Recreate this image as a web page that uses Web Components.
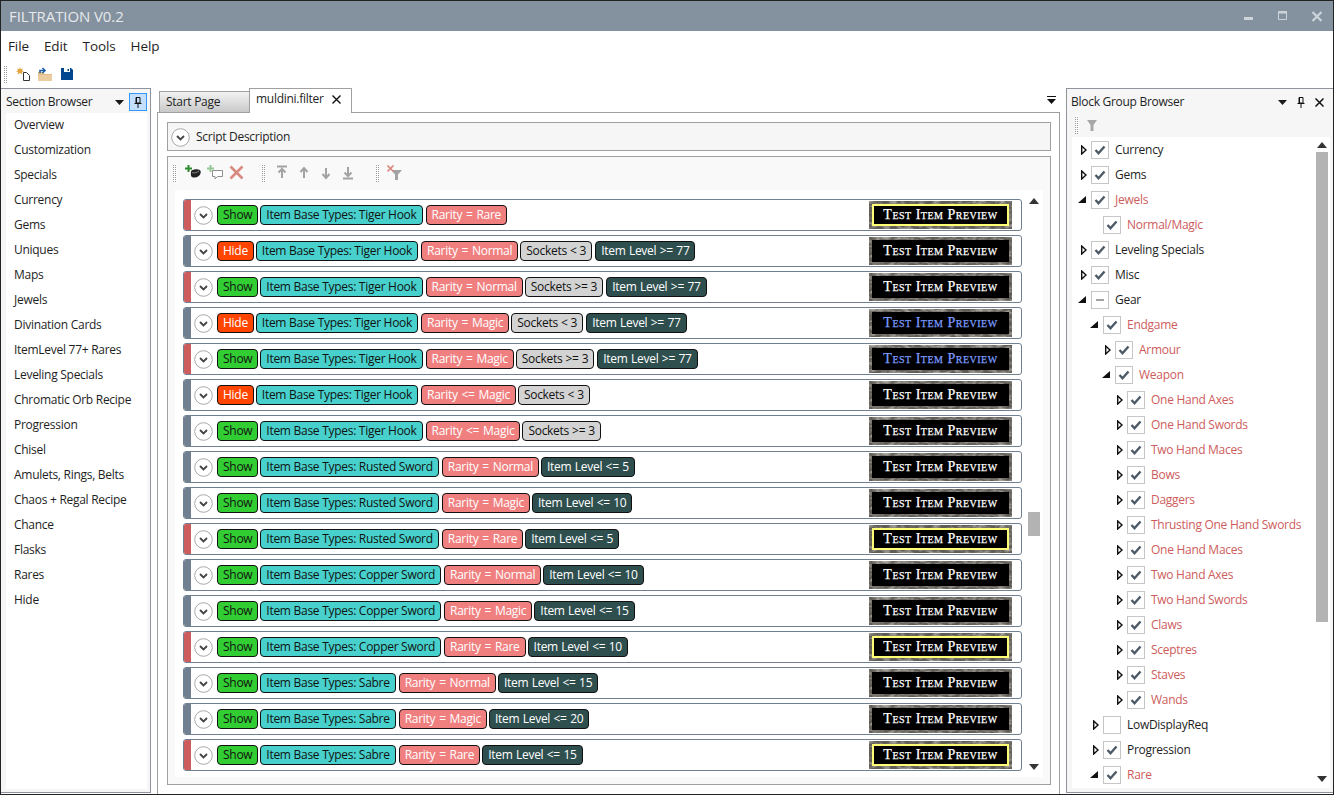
<!DOCTYPE html>
<html>
<head>
<meta charset="utf-8">
<title>Filtration</title>
<style>
    html, body { margin: 0; height: 100%; background: #fff; overflow: hidden; }
    body { font: 12px/16px "Open Sans", "Noto Sans", sans-serif; color: #1e1e1e; letter-spacing: -0.28px; }
</style>
</head>
<body>
<app-window>
    <title-bar slot="title">FILTRATION V0.2</title-bar>
    <menu-bar slot="menu"></menu-bar>
    <main-toolbar slot="tools"></main-toolbar>

    <section-browser slot="left"></section-browser>

    <document-pane slot="center">
        <block-row stripe="red" preview="rare"><filter-tag kind="show">Show</filter-tag><filter-tag kind="base">Item Base Types: Tiger Hook</filter-tag><filter-tag kind="rarity">Rarity = Rare</filter-tag></block-row>
        <block-row preview="normal"><filter-tag kind="hide">Hide</filter-tag><filter-tag kind="base">Item Base Types: Tiger Hook</filter-tag><filter-tag kind="rarity">Rarity = Normal</filter-tag><filter-tag kind="sockets">Sockets &lt; 3</filter-tag><filter-tag kind="level">Item Level &gt;= 77</filter-tag></block-row>
        <block-row stripe="red" preview="normal"><filter-tag kind="show">Show</filter-tag><filter-tag kind="base">Item Base Types: Tiger Hook</filter-tag><filter-tag kind="rarity">Rarity = Normal</filter-tag><filter-tag kind="sockets">Sockets &gt;= 3</filter-tag><filter-tag kind="level">Item Level &gt;= 77</filter-tag></block-row>
        <block-row preview="magic"><filter-tag kind="hide">Hide</filter-tag><filter-tag kind="base">Item Base Types: Tiger Hook</filter-tag><filter-tag kind="rarity">Rarity = Magic</filter-tag><filter-tag kind="sockets">Sockets &lt; 3</filter-tag><filter-tag kind="level">Item Level &gt;= 77</filter-tag></block-row>
        <block-row stripe="red" preview="magic"><filter-tag kind="show">Show</filter-tag><filter-tag kind="base">Item Base Types: Tiger Hook</filter-tag><filter-tag kind="rarity">Rarity = Magic</filter-tag><filter-tag kind="sockets">Sockets &gt;= 3</filter-tag><filter-tag kind="level">Item Level &gt;= 77</filter-tag></block-row>
        <block-row preview="normal"><filter-tag kind="hide">Hide</filter-tag><filter-tag kind="base">Item Base Types: Tiger Hook</filter-tag><filter-tag kind="rarity">Rarity &lt;= Magic</filter-tag><filter-tag kind="sockets">Sockets &lt; 3</filter-tag></block-row>
        <block-row preview="normal"><filter-tag kind="show">Show</filter-tag><filter-tag kind="base">Item Base Types: Tiger Hook</filter-tag><filter-tag kind="rarity">Rarity &lt;= Magic</filter-tag><filter-tag kind="sockets">Sockets &gt;= 3</filter-tag></block-row>
        <block-row preview="normal"><filter-tag kind="show">Show</filter-tag><filter-tag kind="base">Item Base Types: Rusted Sword</filter-tag><filter-tag kind="rarity">Rarity = Normal</filter-tag><filter-tag kind="level">Item Level &lt;= 5</filter-tag></block-row>
        <block-row preview="normal"><filter-tag kind="show">Show</filter-tag><filter-tag kind="base">Item Base Types: Rusted Sword</filter-tag><filter-tag kind="rarity">Rarity = Magic</filter-tag><filter-tag kind="level">Item Level &lt;= 10</filter-tag></block-row>
        <block-row stripe="red" preview="rare"><filter-tag kind="show">Show</filter-tag><filter-tag kind="base">Item Base Types: Rusted Sword</filter-tag><filter-tag kind="rarity">Rarity = Rare</filter-tag><filter-tag kind="level">Item Level &lt;= 5</filter-tag></block-row>
        <block-row preview="normal"><filter-tag kind="show">Show</filter-tag><filter-tag kind="base">Item Base Types: Copper Sword</filter-tag><filter-tag kind="rarity">Rarity = Normal</filter-tag><filter-tag kind="level">Item Level &lt;= 10</filter-tag></block-row>
        <block-row preview="normal"><filter-tag kind="show">Show</filter-tag><filter-tag kind="base">Item Base Types: Copper Sword</filter-tag><filter-tag kind="rarity">Rarity = Magic</filter-tag><filter-tag kind="level">Item Level &lt;= 15</filter-tag></block-row>
        <block-row stripe="red" preview="rare"><filter-tag kind="show">Show</filter-tag><filter-tag kind="base">Item Base Types: Copper Sword</filter-tag><filter-tag kind="rarity">Rarity = Rare</filter-tag><filter-tag kind="level">Item Level &lt;= 10</filter-tag></block-row>
        <block-row preview="normal"><filter-tag kind="show">Show</filter-tag><filter-tag kind="base">Item Base Types: Sabre</filter-tag><filter-tag kind="rarity">Rarity = Normal</filter-tag><filter-tag kind="level">Item Level &lt;= 15</filter-tag></block-row>
        <block-row preview="normal"><filter-tag kind="show">Show</filter-tag><filter-tag kind="base">Item Base Types: Sabre</filter-tag><filter-tag kind="rarity">Rarity = Magic</filter-tag><filter-tag kind="level">Item Level &lt;= 20</filter-tag></block-row>
        <block-row stripe="red" preview="rare"><filter-tag kind="show">Show</filter-tag><filter-tag kind="base">Item Base Types: Sabre</filter-tag><filter-tag kind="rarity">Rarity = Rare</filter-tag><filter-tag kind="level">Item Level &lt;= 15</filter-tag></block-row>
    </document-pane>

    <group-browser slot="right">
        <tree-node state="closed">Currency</tree-node>
        <tree-node state="closed">Gems</tree-node>
        <tree-node state="open" red>Jewels</tree-node>
        <tree-node level="1" red>Normal/Magic</tree-node>
        <tree-node state="closed">Leveling Specials</tree-node>
        <tree-node state="closed">Misc</tree-node>
        <tree-node state="open" check="mixed">Gear</tree-node>
        <tree-node level="1" state="open" red>Endgame</tree-node>
        <tree-node level="2" state="closed" red>Armour</tree-node>
        <tree-node level="2" state="open" red>Weapon</tree-node>
        <tree-node level="3" state="closed" red>One Hand Axes</tree-node>
        <tree-node level="3" state="closed" red>One Hand Swords</tree-node>
        <tree-node level="3" state="closed" red>Two Hand Maces</tree-node>
        <tree-node level="3" state="closed" red>Bows</tree-node>
        <tree-node level="3" state="closed" red>Daggers</tree-node>
        <tree-node level="3" state="closed" red>Thrusting One Hand Swords</tree-node>
        <tree-node level="3" state="closed" red>One Hand Maces</tree-node>
        <tree-node level="3" state="closed" red>Two Hand Axes</tree-node>
        <tree-node level="3" state="closed" red>Two Hand Swords</tree-node>
        <tree-node level="3" state="closed" red>Claws</tree-node>
        <tree-node level="3" state="closed" red>Sceptres</tree-node>
        <tree-node level="3" state="closed" red>Staves</tree-node>
        <tree-node level="3" state="closed" red>Wands</tree-node>
        <tree-node level="1" state="closed" check="none">LowDisplayReq</tree-node>
        <tree-node level="1" state="closed">Progression</tree-node>
        <tree-node level="1" state="open" red>Rare</tree-node>
    </group-browser>
</app-window>

<script>
"use strict";

// Dotted drag handle: white rows laid over 1px columns leave a grid of dots
const GRIP = `background: linear-gradient(#fff 1px, transparent 1px) 0 0 / 2px 2px, linear-gradient(90deg, #9a9a9a 1px, transparent 1px) 0 0 / 2px 2px;`;

class BaseComponent extends HTMLElement {
    constructor() {
        super();
        this.attachShadow({mode: "open"});
    }

    connectedCallback() {
        this.shadowRoot.innerHTML = `<style>${this.css}</style>${this.html}`;
    }

    static classNameToElementName(str) {
        return str.replace(/\.?([A-Z]+)/g, (x, y) => "-" + y.toLowerCase()).replace(/^-/, "");
    }

    static define() {
        customElements.define(this.classNameToElementName(this.name), this);
    }
}

class AppWindow extends BaseComponent {
    get css() {
        return `
        :host { display: flex; flex-direction: column; width: 1334px; height: 795px; box-sizing: border-box; border: 1px solid #222; background: #fff; }
        .dock { flex: 1; min-height: 0; display: flex; gap: 6px; }
        `;
    }
    get html() {
        return `
        <slot name="title"></slot><slot name="menu"></slot><slot name="tools"></slot>
        <div class="dock"><slot name="left"></slot><slot name="center"></slot><slot name="right"></slot></div>`;
    }
}

class TitleBar extends BaseComponent {
    get css() {
        return `
        :host { display: flex; align-items: center; height: 30px; background: #84919e; color: #e6e9ec; font-size: 15px; letter-spacing: -0.1px; padding-left: 8px; }
        .ctl { margin-left: auto; display: flex; }
        svg { display: block; }
        `;
    }
    get html() {
        return `<slot></slot><div class="ctl">
        <svg width="92" height="30" fill="none" stroke="#ccd3d9">
            <path d="M3 17.500h9" stroke-width="3"/>
            <path d="M37.500 10.500h8v8h-8z" stroke-width="1"/><path d="M37 11.500h9" stroke-width="2"/>
            <path d="M71.500 11l9 9M80.500 11l-9 9" stroke-width="2.200"/>
        </svg></div>`;
    }
}

class MenuBar extends BaseComponent {
    get css() {
        return `
        :host { display: flex; gap: 15px; height: 29px; align-items: center; padding: 1px 0 0 7px; box-sizing: border-box; font-size: 13.5px; letter-spacing: -0.1px; }
        `;
    }
    get html() {
        return ["File", "Edit", "Tools", "Help"].map(m => `<span>${m}</span>`).join("");
    }
}

class MainToolbar extends BaseComponent {
    get css() {
        return `
        :host { display: flex; align-items: center; height: 28px; padding-left: 3px; box-sizing: border-box; }
        .grip { width: 4px; height: 18px; margin-right: 7px; ${GRIP} }
        svg { display: block; margin-right: 6px; }
        `;
    }
    get html() {
        return `<div class="grip"></div>
        <svg width="16" height="16"><path d="M8.500 6.500h3l3 3v5h-6z" fill="#fff" stroke="#333"/><path d="M5 1l.8 2.200L8 2.400 7 4.500l2 1-2.200.6L7.500 8.500 5 7 2.500 8.500l.7-2.400L1 5.500l2-1-1-2.100 2.200.8z" fill="#e2a33c"/></svg>
        <svg width="16" height="16" style="margin-right:7px"><path d="M1 6h5l1.500 2H15v7H1z" fill="#e0bd88"/><path d="M1 9h14v6H1z" fill="#ebcda0"/><path d="M3 7V4.500h4M5.500 2l2.500 2.500L5.500 7" fill="none" stroke="#1c5fa8" stroke-width="1.600"/></svg>
        <svg width="14" height="14"><path d="M1 1h10l2 2v10H1z" fill="#00478f"/><path d="M4 1h6v4H4z" fill="#fff"/><path d="M7.500 2H9v2H7.500z" fill="#00478f"/><path d="M3 8h8v5H3z" fill="#00478f"/></svg>`;
    }
}

class DockHeader extends BaseComponent {
    get css() {
        return `
        :host { display: flex; align-items: center; height: 24px; padding: 2px 0 0 var(--head-left, 5px); box-sizing: border-box; }
        .title { flex: 1; }
        svg { display: block; }
        .pin { width: 18px; height: 18px; margin-left: 5px; display: grid; place-items: center; }
        .pin.on { background: #c5e0ff; box-shadow: inset 0 0 0 1px #3399ff; }
        .close { margin-left: 5px; margin-right: 9px; }
        `;
    }
    get html() {
        const closable = this.hasAttribute("closable");
        return `<span class="title"><slot></slot></span>
        <svg width="9" height="5"><path d="M0 0h9L4.500 5z" fill="#1a1a1a"/></svg>
        <div class="pin ${closable ? "" : "on"}"><svg width="8" height="11"><path d="M2 .5h4v5.500H2z M.5 6.500h7M4 6.500v4.500M2.500.5v5.500" fill="none" stroke="#111"/></svg></div>
        ${closable ? `<svg class="close" width="9" height="9"><path d="M.5.5l8 8M8.500.5l-8 8" stroke="#111" stroke-width="1.500"/></svg>` : ""}`;
    }
}

class SectionBrowser extends BaseComponent {
    get css() {
        return `
        :host { display: flex; flex-direction: column; flex: none; width: 150px; margin-bottom: 1px; box-sizing: border-box; border: solid #8f949c; border-width: 1px 1px 1px 0; background: #f6f6f6; }
        ul { list-style: none; margin: 0 3px 3px 5px; padding: 0; flex: 1; background: #fff; }
        li { height: 25px; line-height: 24px; padding-left: 8px; }
        dock-header { margin-right: 3px; }
        `;
    }
    get html() {
        const items = ["Overview", "Customization", "Specials", "Currency", "Gems", "Uniques", "Maps", "Jewels",
            "Divination Cards", "ItemLevel 77+ Rares", "Leveling Specials", "Chromatic Orb Recipe", "Progression",
            "Chisel", "Amulets, Rings, Belts", "Chaos + Regal Recipe", "Chance", "Flasks", "Rares", "Hide"];
        return `<dock-header>Section Browser</dock-header><ul>${items.map(i => `<li>${i}</li>`).join("")}</ul>`;
    }
}

class ScrollTrack extends BaseComponent {
    get css() {
        return `
        :host { display: flex; flex-direction: column; align-items: center; flex: none; width: 14px; }
        svg { display: block; flex: none; }
        .up { margin-top: var(--arrow-top, 8px); }
        .thumb { width: 12px; flex: none; background: #b3b3b3; }
        .down { margin-top: auto; margin-bottom: var(--arrow-bottom, 8px); }
        `;
    }
    get html() {
        const top = this.getAttribute("thumb-top");
        const height = this.getAttribute("thumb-height");
        return `<svg class="up" width="10" height="6"><path d="M5 0l5 6H0z" fill="#333"/></svg>
        <div class="thumb" style="margin-top:${top}px;height:${height}px"></div>
        <svg class="down" width="10" height="6"><path d="M0 0h10L5 6z" fill="#333"/></svg>`;
    }
}

class DocumentPane extends BaseComponent {
    get css() {
        return `
        :host { display: flex; flex-direction: column; flex: none; width: 903px; box-sizing: border-box; }
        .tabs { display: flex; align-items: flex-end; height: 25px; padding-left: 2px; box-sizing: border-box; border-bottom: 1px solid #a0a0a0; }
        .tab { box-sizing: border-box; padding-left: 6px; display: flex; align-items: center; }
        .tab.off { width: 90px; height: 21px; background: linear-gradient(#f2f2f2, #c9c9c9); border: solid #a0a0a0; border-width: 1px 0 0 1px; }
        .tab.on { width: 103px; height: 25px; margin-bottom: -1px; background: #fff; border: solid #a0a0a0; border-width: 1px 1px 0 1px; gap: 8px; padding-bottom: 4px; }
        .over { margin-left: auto; margin-right: 4px; align-self: center; display: block; }
        .body { flex: 1; min-height: 0; display: flex; flex-direction: column; gap: 5px; padding: 9px 8px 9px 9px; border: solid #a0a0a0; border-width: 0 1px; background: #fff; }
        .desc { height: 29px; box-sizing: border-box; flex: none; display: flex; align-items: center; gap: 6px; padding: 1px 0 0 3px; border: 1px solid #a0a0a0; background: #f6f6f6; }
        .group { flex: 1; min-height: 0; display: flex; flex-direction: column; padding: 0 7px 7px; border: 1px solid #a0a0a0; background: #f9f9f9; }
        .bar { height: 30px; margin-bottom: 3px; flex: none; display: flex; align-items: center; padding-top: 1px; box-sizing: border-box; }
        .grip { width: 4px; height: 18px; ${GRIP} }
        .bar svg { display: block; margin-right: 6px; }
        .list { flex: 1; min-height: 0; display: flex; background: #fff; }
        .rows { flex: none; width: 847px; box-sizing: border-box; padding: 9px 0 0 8px; display: flex; flex-direction: column; gap: 4px; }
        scroll-track { margin-left: 5px; --arrow-top: 8px; --arrow-bottom: 7px; }
        `;
    }
    get html() {
        const arrows = {
            top: "M1 1.500h10M6 4v9M2.500 7.500L6 4l3.500 3.500",
            up: "M6 3v10M2.500 7L6 3l3.500 4",
            down: "M6 13V3M2.500 9L6 13l3.500-4",
            bottom: "M1 13.500h10M6 11V2M2.500 7.500L6 11l3.500-3.500",
        };
        const arrow = d => `<svg width="12" height="15" style="margin-right:10px"><path d="${d}" fill="none" stroke="#a3a3a3" stroke-width="2"/></svg>`;
        return `
        <div class="tabs">
            <div class="tab off">Start Page</div>
            <div class="tab on">muldini.filter <svg width="9" height="9"><path d="M.5.5l8 8M8.500.5l-8 8" stroke="#111" stroke-width="1.400"/></svg></div>
            <svg class="over" width="9" height="9"><path d="M0 .5h9" stroke="#111"/><path d="M0 3h9L4.500 8z" fill="#111"/></svg>
        </div>
        <div class="body">
            <div class="desc"><expander-button></expander-button> Script Description</div>
            <div class="group">
                <div class="bar">
                    <div class="grip" style="margin-left:-2px;margin-right:8px"></div>
                    <svg width="16" height="15"><path d="M6 7c0-2 4-3 7-2.500s3 2 2.500 4-3 4-6 4-4-1-3.500-5.500z" fill="#222"/><path d="M7 7.500c2 1 5 0 7-1.500" stroke="#888" fill="none"/><path d="M3.500 0v7M0 3.500h7" stroke="#2d8a2d" stroke-width="2"/></svg>
                    <svg width="16" height="15"><path d="M5.500 5.500h10v6h-5L8 14v-2.500H5.500z" fill="#fff" stroke="#8f8f8f"/><path d="M3.500 0v7M0 3.500h7" stroke="#96c896" stroke-width="2"/></svg>
                    <svg width="15" height="15"><path d="M1.500 1.500l12 12M13.500 1.500l-12 12" stroke="#d98a80" stroke-width="2.600"/></svg>
                    <div class="grip" style="margin-left:12px;margin-right:10px"></div>
                    ${arrow(arrows.top)}${arrow(arrows.up)}${arrow(arrows.down)}${arrow(arrows.bottom)}
                    <div class="grip" style="margin-left:12px;margin-right:7px"></div>
                    <svg width="15" height="15"><path d="M4 5h11l-4 4.500V15H8V9.500z" fill="#a3a3a3"/><path d="M.5.500l6 6M6.500.500l-6 6" stroke="#d98a80" stroke-width="1.600"/></svg>
                </div>
                <div class="list">
                    <div class="rows"><slot></slot></div>
                    <scroll-track thumb-top="308" thumb-height="24"></scroll-track>
                </div>
            </div>
        </div>`;
    }
}

class ExpanderButton extends BaseComponent {
    get css() {
        return `:host { display: block; flex: none; width: 19px; height: 19px; } svg { display: block; }`;
    }
    get html() {
        return `<svg width="19" height="19"><circle cx="9.500" cy="9.500" r="8.800" fill="#fff" stroke="#a8a8a8"/><path d="M6 8l3.500 3.500L13 8" fill="none" stroke="#444" stroke-width="1.800"/></svg>`;
    }
}

class BlockRow extends BaseComponent {
    get css() {
        return `
        :host { display: flex; flex: none; align-items: center; height: 32px; box-sizing: border-box; border: 1px solid #708090; border-radius: 3px; overflow: hidden; background: #fff; }
        .stripe { align-self: stretch; width: 7px; flex: none; background: #708090; }
        .stripe.red { background: #cd5c5c; }
        expander-button { margin: 0 4px 0 3px; }
        .tags { display: flex; gap: 2px; flex: 1; }
        item-preview { margin-right: 9px; }
        `;
    }
    get html() {
        return `<div class="stripe ${this.getAttribute("stripe") || ""}"></div>
        <expander-button></expander-button>
        <div class="tags"><slot></slot></div>
        <item-preview rarity="${this.getAttribute("preview")}"></item-preview>`;
    }
}

class FilterTag extends BaseComponent {
    get css() {
        const kinds = {
            show: "background:#32cd32;color:#111;padding:0 5px",
            hide: "background:#ff4500;color:#fff;padding:0 5px",
            base: "background:#48d1cc;color:#111;padding:0 5px;margin-right:1px",
            rarity: "background:#f08080;color:#fff;padding:0 5px;word-spacing:1px",
            sockets: "background:#d3d3d3;color:#111;padding:0 5px;word-spacing:0.200px;margin-right:1px",
            level: "background:#2f4f4f;color:#fff;padding:0 5px;word-spacing:0.600px",
        };
        return `
        :host { display: block; flex: none; height: 20px; box-sizing: border-box; line-height: 18px; border: 1px solid #111; border-radius: 4px; ${kinds[this.getAttribute("kind")]}; }
        `;
    }
    get html() {
        return `<slot></slot>`;
    }
}

class ItemPreview extends BaseComponent {
    get css() {
        const colors = {normal: "#fff", magic: "#7d9dff", rare: "#fff"};
        const rarity = this.getAttribute("rarity");
        return `
        :host { display: grid; flex: none; width: 143px; height: 28px; }
        svg, .face { grid-area: 1 / 1; }
        svg { display: block; }
        .face { margin: 3px; background: #000; color: ${colors[rarity]}; display: flex; align-items: center; justify-content: center; box-sizing: border-box; ${rarity === "rare" ? "border: 2px solid #ffff77;" : ""}
            font: 14px/1 "Liberation Serif", serif; font-variant: small-caps; letter-spacing: 0.5px; padding-bottom: 1px; -webkit-text-stroke: 0.25px currentColor; }
        `;
    }
    get html() {
        return `<svg width="143" height="28"><filter id="stone"><feTurbulence type="fractalNoise" baseFrequency="0.14 0.3" numOctaves="3" seed="${this.getAttribute("rarity").length}"/><feColorMatrix values="0 0 0 0 .52 0 0 0 0 .5 0 0 0 0 .46 1.800 0 0 0 -.7"/></filter><rect width="143" height="28" fill="#5f5c56"/><rect width="143" height="28" filter="url(#stone)"/></svg>
        <div class="face">Test Item Preview</div>`;
    }
}

class GroupBrowser extends BaseComponent {
    get css() {
        return `
        :host { display: flex; flex-direction: column; flex: none; width: 267px; margin-bottom: 1px; box-sizing: border-box; border: solid #8f949c; border-width: 1px 0 1px 1px; background: #f6f6f6; --head-left: 4px; }
        .bar { height: 24px; flex: none; display: flex; align-items: center; padding-left: 8px; }
        .grip { width: 4px; height: 18px; margin-right: 8px; ${GRIP} }
        svg { display: block; }
        .tree { flex: 1; min-height: 0; margin: 0 3px 4px 5px; display: flex; overflow: hidden; background: #fff; }
        .rows { flex: 1; min-width: 0; }
        scroll-track { --arrow-top: 5px; --arrow-bottom: 6px; margin-right: 1px; }
        `;
    }
    get html() {
        return `<dock-header closable>Block Group Browser</dock-header>
        <div class="bar"><div class="grip"></div><svg width="10" height="11"><path d="M0 0h10L6.500 5v6h-3V5z" fill="#a8a8a8"/></svg></div>
        <div class="tree"><div class="rows"><slot></slot></div><scroll-track thumb-top="4" thumb-height="470"></scroll-track></div>`;
    }
}

class TreeNode extends BaseComponent {
    get css() {
        const level = Number(this.getAttribute("level") || 0);
        return `
        :host { display: flex; align-items: center; height: 25px; padding-left: ${6 + level * 12}px; color: ${this.hasAttribute("red") ? "#cd5c5c" : "#1e1e1e"}; white-space: nowrap; }
        .arrow { width: 13px; flex: none; }
        svg { display: block; }
        .box { width: 18px; height: 18px; box-sizing: border-box; flex: none; border: 1px solid #c6c6c6; background: #fff; margin-right: 6px; display: grid; place-items: center; }
        `;
    }
    get html() {
        const state = this.getAttribute("state");
        const check = this.getAttribute("check");
        let arrow = "";
        if (state === "closed") {
            arrow = `<svg width="13" height="10"><path d="M3.700 1l4.300 4-4.300 4z" fill="#fff" stroke="#111" stroke-width="1.400"/></svg>`;
        } else if (state === "open") {
            arrow = `<svg width="13" height="8"><path d="M0 7h8V0z" fill="#111"/></svg>`;
        }
        let mark = `<svg width="12" height="10"><path d="M1.500 5l3 3.200L10.500 1.500" fill="none" stroke="#4c5967" stroke-width="2.400"/></svg>`;
        if (check === "mixed") {
            mark = `<svg width="8" height="2"><path d="M0 0h8v2H0z" fill="#a3a3a3"/></svg>`;
        } else if (check === "none") {
            mark = "";
        }
        return `<span class="arrow">${arrow}</span><span class="box">${mark}</span><slot></slot>`;
    }
}

for (const component of [AppWindow, TitleBar, MenuBar, MainToolbar, DockHeader, SectionBrowser, ScrollTrack,
    DocumentPane, ExpanderButton, BlockRow, FilterTag, ItemPreview, GroupBrowser, TreeNode]) {
    component.define();
}
</script>
</body>
</html>
